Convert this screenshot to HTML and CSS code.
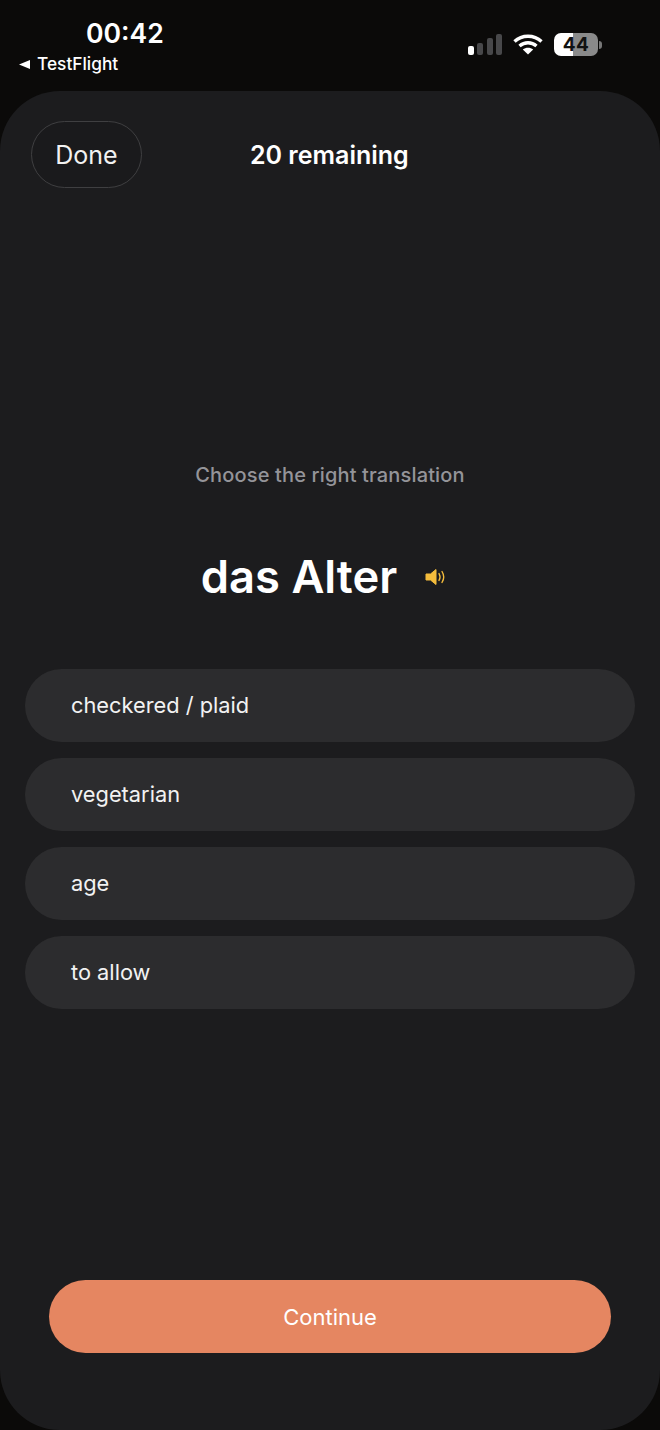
FILE: index.html
```html
<!DOCTYPE html>
<html lang="en">
<head>
    <meta charset="UTF-8">
    <meta name="viewport" content="width=device-width, initial-scale=1.0">
    <title>Quiz</title>
    <link rel="stylesheet" href="styles.css">
</head>
<body>
    <div class="status-bar">
        <div class="status-left">
            <div class="time">00:42</div>
            <div class="back-app">
                <svg class="back-arrow" width="11" height="11" viewBox="0 0 11 11"><path d="M11 1v9L0 5.5z" fill="#fff"/></svg>
                <span>TestFlight</span>
            </div>
        </div>
        <div class="status-right">
            <div class="signal">
                <span class="bar bar-1"></span>
                <span class="bar bar-2"></span>
                <span class="bar bar-3"></span>
                <span class="bar bar-4"></span>
            </div>
            <svg class="wifi" width="30" height="22" viewBox="0 0 30 22">
                <path d="M1.5 8.5C9 1.5 21 1.5 28.5 8.5" fill="none" stroke="#fff" stroke-width="3.4"/>
                <path d="M6.5 13C11.500 8.700 18.500 8.700 23.500 13" fill="none" stroke="#fff" stroke-width="3.4"/>
                <path d="M15 21.500 9.800 16.500C12.800 14.300 17.200 14.300 20.200 16.500z" fill="#fff"/>
            </svg>
            <div class="battery">
                <div class="battery-body">44</div>
                <span class="battery-tip"></span>
            </div>
        </div>
    </div>

    <div class="sheet">
        <div class="sheet-top">
            <button class="done-btn">Done</button>
            <div class="remaining">20 remaining</div>
        </div>

        <div class="question">
            <p class="prompt">Choose the right translation</p>
            <div class="word-row">
                <h1 class="word">das Alter</h1>
                <svg class="speaker" width="22" height="18" viewBox="0 0 22 18">
                    <path d="M1 6h4.500L11 1.500v15L5.500 12H1z" fill="#f4bc3c" stroke="#f4bc3c" stroke-width="1" stroke-linejoin="round"/>
                    <path d="M14 5.500c1.300 2.200 1.300 4.800 0 7" fill="none" stroke="#f4bc3c" stroke-width="1.400" stroke-linecap="round"/>
                    <path d="M17 3.500c2.200 3.500 2.200 7.500 0 11" fill="none" stroke="#f4bc3c" stroke-width="1.400" stroke-linecap="round"/>
                </svg>
            </div>
        </div>

        <div class="answers">
            <div class="answer">checkered / plaid</div>
            <div class="answer">vegetarian</div>
            <div class="answer">age</div>
            <div class="answer">to allow</div>
        </div>

        <button class="continue-btn">Continue</button>
    </div>
</body>
</html>
```
FILE: styles.css
```css
* {
    box-sizing: border-box;
}

html, body {
    height: 100%;
}

body {
    margin: 0;
    background-color: #0b0a09;
    color: #fff;
    font-family: Inter, "Liberation Sans", sans-serif;
    overflow: hidden;
}

.status-bar {
    height: 91px;
    display: flex;
    justify-content: space-between;
    padding: 17px 58px 0 19px;
}

.time {
    font-size: 26.600px;
    font-weight: 600;
    line-height: 32px;
    margin-left: 67px;
}

.back-app {
    display: flex;
    align-items: center;
    gap: 7px;
    font-size: 17.300px;
    font-weight: 500;
    line-height: 20px;
    margin-top: 5px;
}

.status-right {
    display: flex;
    align-items: flex-start;
    padding-top: 16px;
}

.signal {
    display: flex;
    align-items: flex-end;
    gap: 3.500px;
    height: 22px;
    margin-right: 11px;
}

.bar {
    width: 6px;
    background-color: #48484a;
    border-radius: 2px;
}

.bar-1 {
    height: 9px;
    background-color: #fff;
}

.bar-2 {
    height: 12px;
}

.bar-3 {
    height: 17px;
}

.bar-4 {
    height: 21px;
}

.wifi {
    margin-right: 11px;
}

.battery {
    display: flex;
    align-items: center;
    height: 23px;
}

.battery-body {
    width: 44px;
    height: 23px;
    border-radius: 7px;
    background: linear-gradient(to right, #fff 43%, #8a8a8a 43%);
    color: #111;
    font-size: 19px;
    font-weight: 700;
    letter-spacing: 0.500px;
    line-height: 23px;
    text-align: center;
}

.battery-tip {
    width: 3px;
    height: 8px;
    margin-left: 1px;
    background-color: #777;
    border-radius: 0 3px 3px 0;
}

.sheet {
    height: 1339px;
    background-color: #1c1c1e;
    border-radius: 60px;
    padding: 30px 25px 0;
    display: flex;
    flex-direction: column;
}

.sheet-top {
    display: flex;
    align-items: center;
    padding-left: 6px;
}

.done-btn {
    width: 111px;
    height: 67px;
    border: 1px solid #3f3f41;
    border-radius: 34px;
    background-color: #1a1a1c;
    color: #f2f2f2;
    font: 400 25px Inter, "Liberation Sans", sans-serif;
}

.remaining {
    font-size: 25px;
    font-weight: 600;
    margin-left: 108px;
}

.question {
    text-align: center;
    margin-top: 273px;
}

.prompt {
    margin: 0;
    color: #949499;
    font-size: 20px;
    font-weight: 500;
    letter-spacing: 0.150px;
    line-height: 28px;
}

.word-row {
    display: flex;
    justify-content: center;
    align-items: center;
    gap: 28px;
    margin-top: 58px;
}

.word {
    margin: 0;
    font-size: 45.300px;
    font-weight: 600;
    line-height: 60px;
}

.speaker {
    margin-right: 12px;
}

.answers {
    display: flex;
    flex-direction: column;
    gap: 16px;
    margin-top: 62px;
}

.answer {
    height: 73px;
    border-radius: 37px;
    background-color: #2c2c2e;
    color: #f2f2f2;
    font-size: 21.800px;
    line-height: 73px;
    padding-left: 46px;
}

.continue-btn {
    width: 562px;
    height: 73px;
    margin: 271px 0 0 24px;
    border: none;
    border-radius: 37px;
    background-color: #e58661;
    color: #fff;
    font: 400 22px Inter, "Liberation Sans", sans-serif;
}
```
